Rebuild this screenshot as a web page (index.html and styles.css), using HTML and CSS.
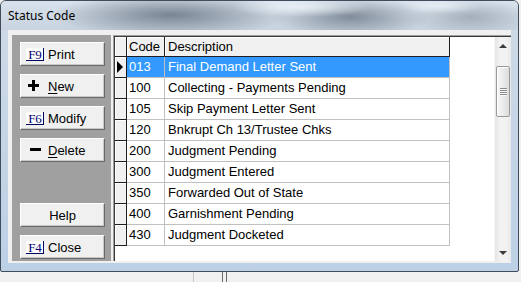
FILE: index.html
```html
<!DOCTYPE html>
<html lang="en">
<head>
<meta charset="UTF-8" />
<title>Status Code</title>
<link rel="stylesheet" href="styles.css">
</head>
<body>

<div class="window">
  <div class="titlebar">Status Code</div>

  <div class="frame">
    <div class="client">

      <!-- Command buttons -->
      <div class="toolbar">
        <button class="btn"><span class="fkey">F9</span>Print</button>
        <button class="btn"><span class="ico plus"></span><u>N</u>ew</button>
        <button class="btn"><span class="fkey">F6</span>Modify</button>
        <button class="btn"><span class="ico minus"></span><u>D</u>elete</button>
        <button class="btn btn-center help">Help</button>
        <button class="btn"><span class="fkey">F4</span>Close</button>
      </div>

      <!-- Status code grid -->
      <div class="grid">
        <div class="rows">
          <div class="row head">
            <div class="ind"></div>
            <div class="cell">Code</div>
            <div class="cell">Description</div>
          </div>
          <div class="row selected">
            <div class="ind"><span class="pointer"></span></div>
            <div class="cell">013</div>
            <div class="cell">Final Demand Letter Sent</div>
          </div>
          <div class="row">
            <div class="ind"></div>
            <div class="cell">100</div>
            <div class="cell">Collecting - Payments Pending</div>
          </div>
          <div class="row">
            <div class="ind"></div>
            <div class="cell">105</div>
            <div class="cell">Skip Payment Letter Sent</div>
          </div>
          <div class="row">
            <div class="ind"></div>
            <div class="cell">120</div>
            <div class="cell">Bnkrupt Ch 13/Trustee Chks</div>
          </div>
          <div class="row">
            <div class="ind"></div>
            <div class="cell">200</div>
            <div class="cell">Judgment Pending</div>
          </div>
          <div class="row">
            <div class="ind"></div>
            <div class="cell">300</div>
            <div class="cell">Judgment Entered</div>
          </div>
          <div class="row">
            <div class="ind"></div>
            <div class="cell">350</div>
            <div class="cell">Forwarded Out of State</div>
          </div>
          <div class="row">
            <div class="ind"></div>
            <div class="cell">400</div>
            <div class="cell">Garnishment Pending</div>
          </div>
          <div class="row">
            <div class="ind"></div>
            <div class="cell">430</div>
            <div class="cell">Judgment Docketed</div>
          </div>
        </div>

        <div class="vscroll">
          <div class="arrow up"></div>
          <div class="track">
            <div class="thumb"><span class="grip"></span></div>
          </div>
          <div class="arrow down"></div>
        </div>
      </div>

    </div>
  </div>
</div>

<div class="desk">
  <span class="mark light"></span>
  <span class="mark"></span>
  <span class="mark"></span>
</div>

</body>
</html>
```

FILE: styles.css
```css
/* Reset & base */
*, *::before, *::after {
  box-sizing: border-box;
}
body {
  margin: 0;
  background: #f0f0f0;
  font-family: "Liberation Sans", Arial, sans-serif;
  font-size: 13px;
  color: #000;
}

/* Window frame */
.window {
  width: 519px;
  height: 272px;
  border: 1px solid #3e4c5b;
  border-radius: 6px 6px 2px 2px;
  background: linear-gradient(#cfdae6, #bcd0e6);
  display: flex;
  flex-direction: column;
  overflow: hidden;
}

.titlebar {
  height: 29px;
  padding: 1px 0 0 7px;
  line-height: 28px;
  font-family: "Noto Sans", "Open Sans", sans-serif;
  font-size: 12px;
  color: #000;
  background:
    radial-gradient(ellipse 70px 10px at 300px 6px, rgba(235, 242, 248, 0.9), transparent),
    radial-gradient(ellipse 40px 8px at 440px 5px, rgba(235, 242, 248, 0.8), transparent),
    radial-gradient(ellipse 120px 22px at 170px 14px, rgba(90, 104, 118, 0.75), transparent),
    radial-gradient(ellipse 80px 20px at 350px 16px, rgba(95, 108, 122, 0.7), transparent),
    radial-gradient(ellipse 60px 18px at 470px 16px, rgba(120, 132, 145, 0.5), transparent),
    linear-gradient(#d9e2ec, #c7d3df);
}

.frame {
  flex: 1;
  padding: 0 7px 8px 7px;
}

.client {
  height: 233px;
  background: #f0f0f0;
  display: flex;
  align-items: flex-start;
  gap: 2px;
  padding: 5px 0 0 4px;
}

/* Left command panel */
.toolbar {
  width: 99px;
  height: 226px;
  background: #a0a0a0;
  display: flex;
  flex-direction: column;
  gap: 8px;
  padding: 7px 6px 2px 8px;
}

.btn {
  width: 85px;
  height: 24px;
  display: flex;
  align-items: center;
  padding: 0 0 0 5px;
  background: #f0f0f0;
  border: 1px solid;
  border-color: #fff #696969 #696969 #fff;
  box-shadow: inset -1px -1px 0 #c8c8c8;
  font-family: "Liberation Sans", Arial, sans-serif;
  font-size: 13px;
  color: #000;
}
.btn u {
  text-decoration-thickness: 1px;
  text-underline-offset: 2px;
}
.btn-center {
  justify-content: center;
  padding: 0;
}
.help {
  margin-top: auto;
}

.fkey {
  width: 18px;
  height: 13px;
  margin-right: 4px;
  padding-left: 1px;
  font-family: "Liberation Serif", "Times New Roman", serif;
  font-size: 13px;
  line-height: 13px;
  color: #000070;
  background: #fff;
  border-right: 1px solid #000060;
  border-bottom: 1px solid #000060;
}

.ico {
  width: 18px;
  height: 12px;
  margin-right: 4px;
  position: relative;
}
.plus::before,
.plus::after,
.minus::before {
  content: "";
  position: absolute;
  background: #000;
}
.plus::before {
  left: 2px;
  top: 4px;
  width: 11px;
  height: 3px;
}
.plus::after {
  left: 6px;
  top: 0;
  width: 3px;
  height: 11px;
}
.minus::before {
  left: 4px;
  top: 4px;
  width: 11px;
  height: 3px;
}

/* Grid */
.grid {
  flex: 1;
  height: 226px;
  display: flex;
  background: #fff;
  border-top: 1px solid #a0a0a0;
  border-left: 1px solid #a0a0a0;
  padding: 1px 0 0 1px;
  box-shadow: inset 1px 1px 0 #3a3a3a;
}

.rows {
  flex: 1;
}

.row {
  display: grid;
  grid-template-columns: 12px 38px 285px;
  height: 21px;
}
.row.head {
  height: 20px;
}

.cell {
  padding-left: 2px;
  line-height: 20px;
  white-space: nowrap;
  border-right: 1px solid #c0c0c0;
  border-bottom: 1px solid #c0c0c0;
}
.cell + .cell {
  padding-left: 3px;
}

.ind {
  background: #f0f0f0;
  border-right: 1px solid #1e1e1e;
  border-bottom: 1px solid #1e1e1e;
  box-shadow: inset 1px 1px 0 #fff;
  position: relative;
}

.head .cell {
  background: #f0f0f0;
  line-height: 19px;
  border-right-color: #1e1e1e;
  border-bottom-color: #1e1e1e;
  box-shadow: inset 1px 1px 0 #fff;
}

.selected .cell {
  background: #3399ff;
  color: #fff;
}

.pointer {
  position: absolute;
  left: 2px;
  top: 4px;
  border-left: 6px solid #000;
  border-top: 6px solid transparent;
  border-bottom: 6px solid transparent;
}

/* Vertical scrollbar */
.vscroll {
  width: 17px;
  display: flex;
  flex-direction: column;
  background: linear-gradient(to right, #e4e4e4, #f2f2f2 30%, #f2f2f2 70%, #e9e9e9);
  border-left: 1px solid #f8f8f8;
}

.arrow {
  height: 17px;
  display: flex;
  align-items: center;
  justify-content: center;
}
.arrow::before {
  content: "";
  border-left: 4px solid transparent;
  border-right: 4px solid transparent;
}
.arrow.up::before {
  border-bottom: 4px solid #3c3c3c;
}
.arrow.down::before {
  border-top: 4px solid #3c3c3c;
}

.track {
  flex: 1;
  padding: 12px 1px 0 1px;
}

.thumb {
  height: 51px;
  border: 1px solid #989898;
  border-radius: 2px;
  background: linear-gradient(to right, #f6f6f6, #ebebeb 50%, #dcdcdc);
  box-shadow: inset 1px 1px 0 #fff;
  display: flex;
  align-items: center;
  justify-content: center;
}

.grip {
  width: 7px;
  height: 8px;
  background: repeating-linear-gradient(#8a8a8a 0 1px, #fafafa 1px 2px);
}

/* Desktop strip below the window */
.desk {
  height: 10px;
  display: flex;
  padding-left: 193px;
}
.mark {
  width: 1px;
  height: 10px;
  background: #6a6a6a;
  margin-right: 3px;
}
.mark.light {
  background: #c8c8c8;
  margin-right: 28px;
}
```
